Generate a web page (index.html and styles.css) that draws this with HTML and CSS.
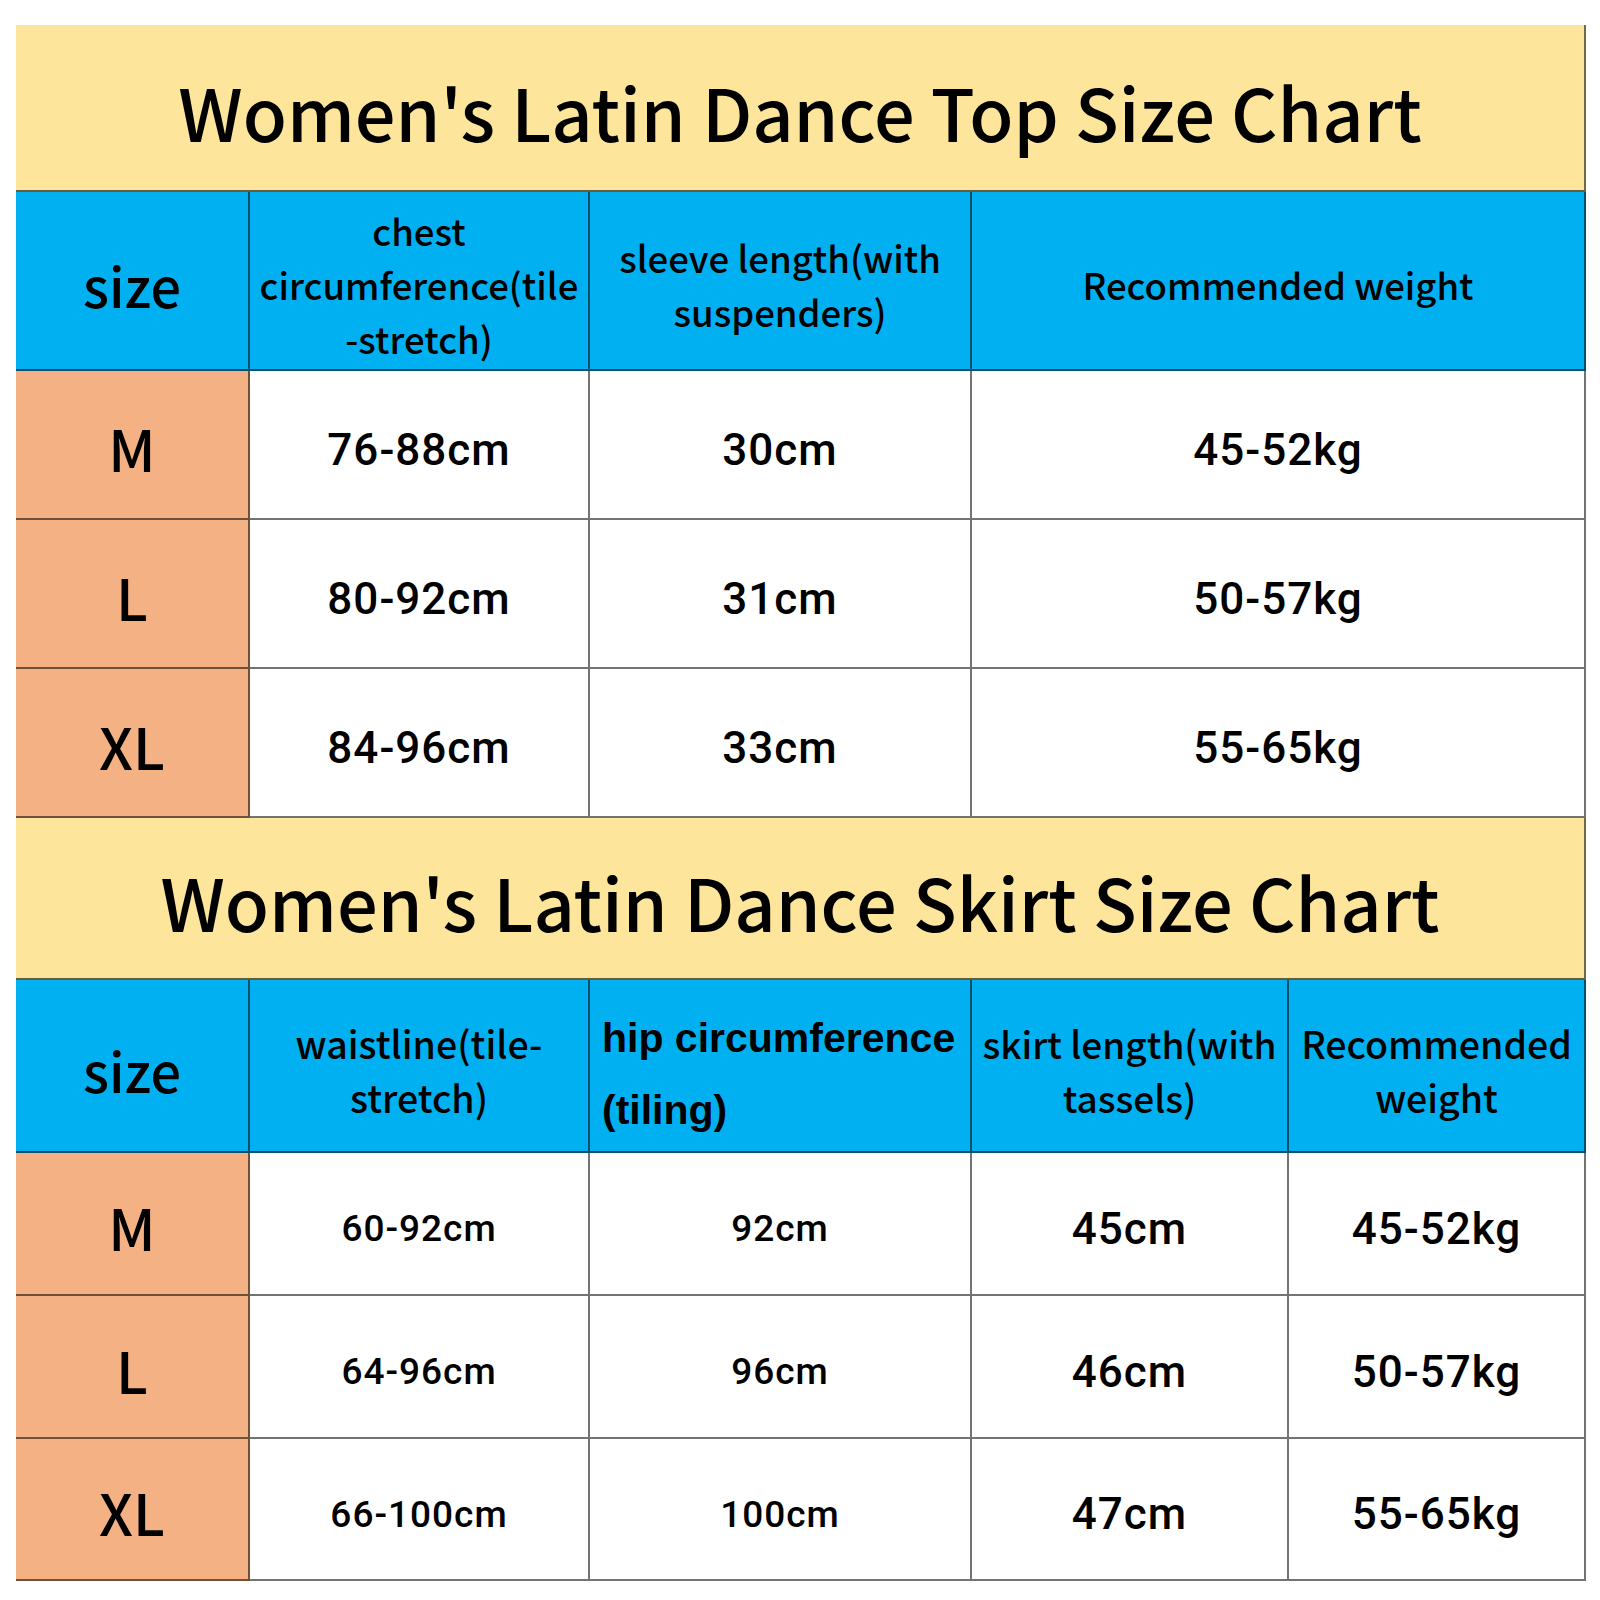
FILE: index.html
```html
<!DOCTYPE html>
<html lang="en">
<head>
<meta charset="utf-8">
<title>Women's Latin Dance Size Chart</title>
<link rel="stylesheet" href="styles.css">
</head>
<body>
<main class="chart">
  <section class="table table-top">
    <h1 class="title">Women's Latin Dance Top Size Chart</h1>
    <div class="cell head head-size">size</div>
    <div class="cell head">chest<br>circumference(tile<br>-stretch)</div>
    <div class="cell head">sleeve length(with<br>suspenders)</div>
    <div class="cell head">Recommended weight</div>

    <div class="cell size">M</div>
    <div class="cell num">76-88cm</div>
    <div class="cell num">30cm</div>
    <div class="cell num">45-52kg</div>

    <div class="cell size">L</div>
    <div class="cell num">80-92cm</div>
    <div class="cell num">31cm</div>
    <div class="cell num">50-57kg</div>

    <div class="cell size">XL</div>
    <div class="cell num">84-96cm</div>
    <div class="cell num">33cm</div>
    <div class="cell num">55-65kg</div>
  </section>

  <section class="table table-bottom">
    <h1 class="title">Women's Latin Dance Skirt Size Chart</h1>
    <div class="cell head head-size">size</div>
    <div class="cell head head-lg">waistline(tile-<br>stretch)</div>
    <div class="cell head head-bold">hip circumference<br>(tiling)</div>
    <div class="cell head head-md">skirt length(with<br>tassels)</div>
    <div class="cell head head-lg">Recommended<br>weight</div>

    <div class="cell size">M</div>
    <div class="cell num num-sm">60-92cm</div>
    <div class="cell num num-sm">92cm</div>
    <div class="cell num">45cm</div>
    <div class="cell num">45-52kg</div>

    <div class="cell size">L</div>
    <div class="cell num num-sm">64-96cm</div>
    <div class="cell num num-sm">96cm</div>
    <div class="cell num">46cm</div>
    <div class="cell num">50-57kg</div>

    <div class="cell size">XL</div>
    <div class="cell num num-sm">66-100cm</div>
    <div class="cell num num-sm">100cm</div>
    <div class="cell num">47cm</div>
    <div class="cell num">55-65kg</div>
  </section>
</main>
</body>
</html>
```

FILE: styles.css
```css
* { box-sizing: border-box; }

html, body {
  margin: 0;
  padding: 0;
  background: #ffffff;
}

body {
  font-family: "Noto Sans CJK SC", "Noto Sans", sans-serif;
  color: #000;
}

.chart {
  width: 1600px;
  padding: 25px 14px 0 16px;
}

.table {
  display: grid;
}

.table-top {
  grid-template-columns: 234px 340px 382px 614px;
  grid-template-rows: 167px 179px 149px 149px 149px;
}

.table-bottom {
  grid-template-columns: 234px 340px 382px 317px 297px;
  grid-template-rows: 162px 173px 143px 143px 142px;
}

.title {
  grid-column: 1 / -1;
  margin: 0;
  background: #fde69b;
  border-right: 2px solid rgba(0, 0, 0, 0.55);
  border-bottom: 2px solid rgba(0, 0, 0, 0.6);
  display: flex;
  align-items: center;
  justify-content: center;
  font-size: 72px;
  font-weight: 500;
  line-height: 1;
  padding-top: 6px;
}

.cell {
  display: flex;
  align-items: center;
  justify-content: center;
  text-align: center;
  border-right: 2px solid rgba(0, 0, 0, 0.55);
  border-bottom: 2px solid rgba(0, 0, 0, 0.55);
  background: #ffffff;
}

.head {
  background: #00b0f0;
  font-size: 36.5px;
  font-weight: 500;
  line-height: 54px;
  padding-top: 8px;
}

.head-lg {
  font-size: 37.5px;
}

.head-md {
  font-size: 37px;
}

.head-size {
  font-size: 54px;
  font-weight: 500;
}

.head-bold {
  font-family: "Liberation Sans", Arial, sans-serif;
  font-weight: 700;
  font-size: 41px;
  line-height: 72px;
  justify-content: flex-start;
  text-align: left;
  padding-left: 12px;
  padding-top: 16px;
}

.size {
  background: #f4b184;
  font-size: 57px;
  font-weight: 500;
  padding-top: 4px;
}

.num {
  font-family: Roboto, "Liberation Sans", sans-serif;
  font-weight: 500;
  font-size: 44px;
  letter-spacing: 1px;
  padding-top: 10px;
}

.num-sm {
  font-size: 37px;
}
```
